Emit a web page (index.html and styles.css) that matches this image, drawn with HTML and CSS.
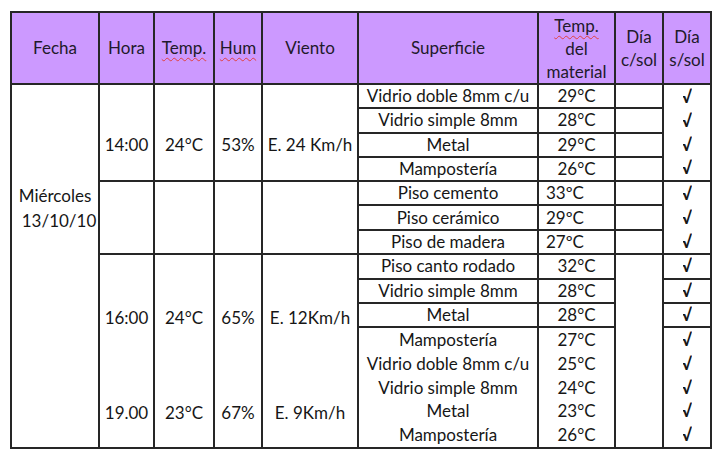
FILE: index.html
```html
<!DOCTYPE html>
<html lang="es">
<head>
<meta charset="utf-8">
<title>Tabla de temperaturas</title>
<link rel="stylesheet" href="styles.css">
</head>
<body>
<table class="grid">
  <colgroup>
    <col class="w-fecha"><col class="w-hora"><col class="w-temp"><col class="w-hum"><col class="w-viento">
    <col class="w-sup"><col class="w-tmat"><col class="w-dia"><col class="w-dia">
  </colgroup>
  <thead>
    <tr class="head">
      <th>Fecha</th>
      <th>Hora</th>
      <th><span class="sp">Temp.</span></th>
      <th><span class="sp">Hum</span></th>
      <th>Viento</th>
      <th>Superficie</th>
      <th class="tight"><span class="sp">Temp.</span><br>del<br>material</th>
      <th class="two">Día<br>c/sol</th>
      <th class="two">Día<br>s/sol</th>
    </tr>
  </thead>
  <tbody>
    <tr class="r">
      <td rowspan="15" class="fecha"><div>Miércoles</div><div class="date">13/10/10</div></td>
      <td rowspan="4" class="g1">14:00</td>
      <td rowspan="4" class="g1">24°C</td>
      <td rowspan="4" class="g1">53%</td>
      <td rowspan="4" class="g1">E. 24 Km/h</td>
      <td>Vidrio doble 8mm c/u</td>
      <td>29°C</td>
      <td></td>
      <td rowspan="4" class="stack chk"><div><span class="v">√</span></div><div><span class="v">√</span></div><div><span class="v">√</span></div><div><span class="v">√</span></div></td>
    </tr>
    <tr class="r"><td>Vidrio simple 8mm</td><td>28°C</td><td></td></tr>
    <tr class="r"><td>Metal</td><td>29°C</td><td></td></tr>
    <tr class="r"><td>Mampostería</td><td>26°C</td><td></td></tr>
    <tr class="r">
      <td rowspan="3"></td><td rowspan="3"></td><td rowspan="3"></td><td rowspan="3"></td>
      <td>Piso cemento</td>
      <td class="left">33ºC</td>
      <td></td>
      <td rowspan="3" class="stack chk"><div><span class="v">√</span></div><div><span class="v">√</span></div><div><span class="v">√</span></div></td>
    </tr>
    <tr class="r"><td>Piso cerámico</td><td class="left">29ºC</td><td></td></tr>
    <tr class="r"><td>Piso de madera</td><td class="left">27ºC</td><td></td></tr>
    <tr class="r">
      <td rowspan="8" class="g3"><div>16:00</div><div class="late">19.00</div></td>
      <td rowspan="8" class="g3"><div>24°C</div><div class="late">23°C</div></td>
      <td rowspan="8" class="g3"><div>65%</div><div class="late">67%</div></td>
      <td rowspan="8" class="g3"><div>E. 12Km/h</div><div class="late">E. 9Km/h</div></td>
      <td>Piso canto rodado</td>
      <td>32°C</td>
      <td rowspan="8"></td>
      <td class="chk"><span class="v">√</span></td>
    </tr>
    <tr class="r"><td>Vidrio simple 8mm</td><td>28°C</td><td class="chk"><span class="v">√</span></td></tr>
    <tr class="r"><td>Metal</td><td>28°C</td><td class="chk"><span class="v">√</span></td></tr>
    <tr class="r">
      <td rowspan="5" class="stack"><div>Mampostería</div><div>Vidrio doble 8mm c/u</div><div>Vidrio simple 8mm</div><div>Metal</div><div>Mampostería</div></td>
      <td rowspan="5" class="stack"><div>27°C</div><div>25°C</div><div>24°C</div><div>23°C</div><div>26°C</div></td>
      <td rowspan="5" class="stack chk"><div><span class="v">√</span></div><div><span class="v">√</span></div><div><span class="v">√</span></div><div><span class="v">√</span></div><div><span class="v">√</span></div></td>
    </tr>
    <tr class="r"></tr>
    <tr class="r"></tr>
    <tr class="r"></tr>
    <tr class="r"></tr>
  </tbody>
</table>
</body>
</html>
```

FILE: styles.css
```css
html, body {
  margin: 0;
  padding: 0;
  background: #ffffff;
}

.grid {
  margin: 11px 0 0 10px;
  border-collapse: collapse;
  table-layout: fixed;
  width: 702px;
  font-family: Lato, "Open Sans", sans-serif;
  font-size: 17px;
  color: #161616;
}

.w-fecha { width: 88px; }
.w-hora { width: 55px; }
.w-temp { width: 60px; }
.w-hum { width: 48px; }
.w-viento { width: 96px; }
.w-sup { width: 180px; }
.w-tmat { width: 77px; }
.w-dia { width: 48px; }

.grid th,
.grid td {
  border: 2px solid #262626;
  padding: 0;
  text-align: center;
  vertical-align: middle;
  white-space: nowrap;
  line-height: 22px;
}

.head {
  height: 71px;
}

.head th {
  background: #cc99ff;
  font-weight: normal;
  color: #221a2b;
}

.head th.tight {
  line-height: 23px;
  padding-top: 1px;
}

.head th.two {
  line-height: 23px;
}

.sp {
  text-decoration: underline wavy #e04040;
  text-decoration-thickness: 1px;
  text-underline-offset: 3px;
}

.r {
  height: 24.27px;
}

.grid td.left {
  text-align: left;
  padding-left: 7px;
}

.grid td.fecha {
  vertical-align: top;
  padding-top: 98px;
  line-height: 25px;
}

.fecha .date {
  padding-left: 8px;
}

.grid td.g1 {
  vertical-align: top;
  padding-top: 49px;
}

.grid td.g3 {
  vertical-align: top;
  padding-top: 52px;
}

.g3 .late {
  margin-top: 73px;
}

.grid td.stack {
  vertical-align: top;
  padding-top: 0;
}

.grid td.stack div {
  height: 23.77px;
  line-height: 23.77px;
}

.chk {
  font-weight: 700;
}

.v {
  display: inline-block;
  width: 9px;
  overflow: hidden;
  vertical-align: top;
  text-align: left;
  text-indent: -1px;
}
```
